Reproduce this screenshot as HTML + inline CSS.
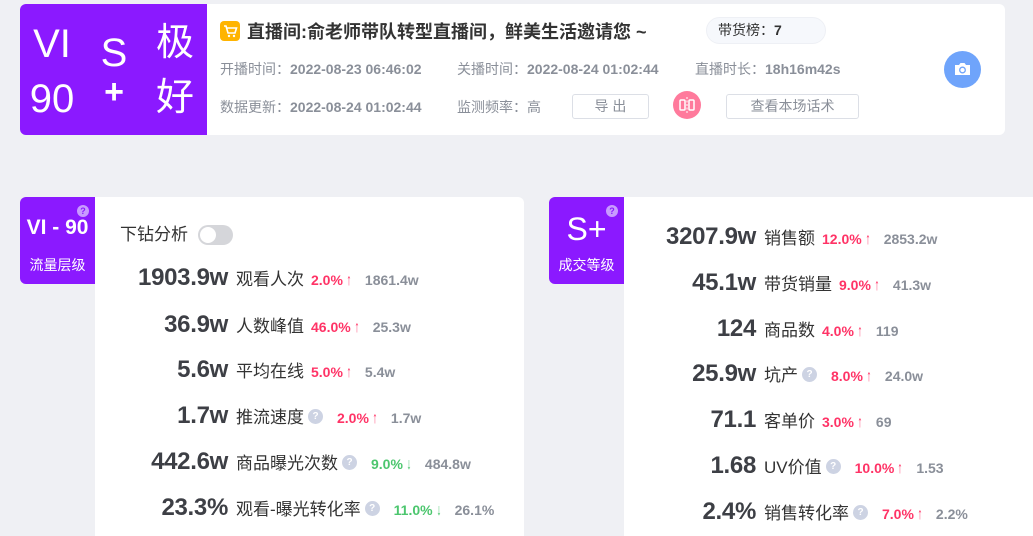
<!DOCTYPE html>
<html><head><meta charset="utf-8"><style>
*{margin:0;padding:0;box-sizing:border-box}
body{width:1033px;height:536px;overflow:hidden;background:#eff0f4;font-family:"Liberation Sans","Noto Sans CJK SC",sans-serif;position:relative;color:#333}
.a{position:absolute}
.hdr{left:20px;top:4px;width:985px;height:131px;background:#fff;border-radius:6px;overflow:hidden}
.pur{background:#8b19ff;color:#fff}
.big{font-size:38px;line-height:1;text-align:center}
.g{color:#8a8f99;font-size:14px}
.gb{color:#8a8f99;font-size:14px;font-weight:bold}
.btn{border:1px solid #dcdfe6;border-radius:3px;background:#fff;color:#8a8f99;font-size:14px;text-align:center;line-height:22px}
.card{background:#fff;border-radius:0 6px 0 0}
.badge{border-radius:6px 0 0 6px}
.row{position:absolute;display:flex;align-items:baseline;height:30px;white-space:nowrap;line-height:1}
.num{font-size:24px;font-weight:bold;color:#3d3f45;text-align:right;letter-spacing:-0.3px}
.lb{font-size:17px;color:#333;margin-left:8px}
.q{display:inline-block;width:15px;height:15px;border-radius:50%;background:#cdd3e3;color:#fff;font-size:10px;font-weight:bold;text-align:center;line-height:15px;margin-left:4px;position:relative;top:-4px}
.pc{font-size:14px;font-weight:bold;margin-left:7px}
.r{color:#ff3366}.gr{color:#4cc66e}
.ar{font-size:16px;margin-left:2px;transform:scaleX(.6);display:inline-block}
.pv{font-size:14px;font-weight:bold;color:#8a8f99;margin-left:12px}
.qq{width:12px;height:12px;border-radius:50%;background:#c89bff;color:#8b19ff;font-size:9px;font-weight:bold;text-align:center;line-height:12px}
</style></head><body>
<div class="a hdr">
 <div class="a pur" style="left:0;top:0;width:187px;height:131px"></div>
</div>
<div class="a big" style="left:30px;top:24px;width:44px;color:#fff;font-size:40px">VI</div>
<div class="a big" style="left:28px;top:79px;width:48px;color:#fff;font-size:40px">90</div>
<div class="a big" style="left:96px;top:33px;width:36px;color:#fff;font-size:40px">S</div>
<div class="a big" style="left:96px;top:75px;width:36px;color:#fff;font-size:34px;font-weight:bold">+</div>
<div class="a big" style="left:154px;top:24px;width:42px;color:#fff;font-size:38px">极</div>
<div class="a big" style="left:154px;top:79px;width:42px;color:#fff;font-size:38px">好</div>

<div class="a" style="left:220px;top:21px;width:20px;height:20px;background:#ffb400;border-radius:4px">
<svg width="20" height="20" viewBox="0 0 20 20"><path d="M4 5h2l2 7h7l1.5-5H7" fill="none" stroke="#fff" stroke-width="1.6"/><circle cx="9" cy="15" r="1.2" fill="#fff"/><circle cx="14" cy="15" r="1.2" fill="#fff"/></svg></div>
<div class="a" style="left:247px;top:20px;font-size:18px;font-weight:bold;color:#333;white-space:nowrap;line-height:24px">直播间:俞老师带队转型直播间，鲜美生活邀请您 ~</div>
<div class="a" style="left:706px;top:17px;width:120px;height:27px;border-radius:14px;background:#f6f8fc;border:1px solid #eef0f5;font-size:14px;line-height:25px;padding-left:11px;color:#333">带货榜：<b>7</b></div>

<div class="a g" style="left:220px;top:59px;white-space:nowrap">开播时间：<span class="gb">2022-08-23 06:46:02</span></div>
<div class="a g" style="left:457px;top:59px;white-space:nowrap">关播时间：<span class="gb">2022-08-24 01:02:44</span></div>
<div class="a g" style="left:695px;top:59px;white-space:nowrap">直播时长：<span class="gb">18h16m42s</span></div>
<div class="a g" style="left:220px;top:97px;white-space:nowrap">数据更新：<span class="gb">2022-08-24 01:02:44</span></div>
<div class="a g" style="left:457px;top:97px;white-space:nowrap">监测频率：高</div>
<div class="a btn" style="left:572px;top:94px;width:77px;height:25px">导 出</div>
<div class="a" style="left:673px;top:91px;width:28px;height:28px;border-radius:50%;background:#ff7a9c">
<svg width="28" height="28" viewBox="0 0 28 28"><rect x="7" y="9" width="5" height="10" rx="1" fill="none" stroke="#fff" stroke-width="1.5"/><rect x="16" y="9" width="5" height="10" rx="1" fill="none" stroke="#fff" stroke-width="1.5"/><path d="M14 6v16" stroke="#fff" stroke-width="1" stroke-dasharray="2 1.5"/></svg></div>
<div class="a btn" style="left:726px;top:94px;width:133px;height:25px">查看本场话术</div>
<div class="a" style="left:944px;top:51px;width:37px;height:37px;border-radius:50%;background:#6fa4fb">
<svg width="37" height="37" viewBox="0 0 37 37"><path d="M11 14h4l1.5-2h4l1.5 2h4v10h-15z" fill="#fff"/><circle cx="18.5" cy="19" r="2.8" fill="none" stroke="#6fa4fb" stroke-width="1.3"/></svg></div>

<!-- left card -->
<div class="a card" style="left:95px;top:197px;width:429px;height:339px"></div>
<div class="a pur badge" style="left:20px;top:197px;width:75px;height:87px"></div>
<div class="a qq" style="left:77px;top:205px">?</div>
<div class="a" style="left:20px;top:216px;width:75px;text-align:center;color:#fff;font-size:21px;font-weight:bold">VI - 90</div>
<div class="a" style="left:20px;top:255px;width:75px;text-align:center;color:#fff;font-size:14px">流量层级</div>
<div class="a" style="left:120px;top:224px;font-size:17px;color:#333;line-height:22px">下钻分析</div>
<div class="a" style="left:198px;top:225px;width:35px;height:20px;border-radius:10px;background:#d5d6da"><div style="position:absolute;left:2px;top:2px;width:16px;height:16px;border-radius:50%;background:#fff"></div></div>

<div class="row" style="left:100px;top:266px"><div class="num" style="width:128px">1903.9w</div><span class="lb">观看人次</span><span class="pc r">2.0%</span><span class="ar r">↑</span><span class="pv">1861.4w</span></div>
<div class="row" style="left:100px;top:313px"><div class="num" style="width:128px">36.9w</div><span class="lb">人数峰值</span><span class="pc r">46.0%</span><span class="ar r">↑</span><span class="pv">25.3w</span></div>
<div class="row" style="left:100px;top:358px"><div class="num" style="width:128px">5.6w</div><span class="lb">平均在线</span><span class="pc r">5.0%</span><span class="ar r">↑</span><span class="pv">5.4w</span></div>
<div class="row" style="left:100px;top:404px"><div class="num" style="width:128px">1.7w</div><span class="lb">推流速度</span><span class="q">?</span><span class="pc r" style="margin-left:14px">2.0%</span><span class="ar r">↑</span><span class="pv">1.7w</span></div>
<div class="row" style="left:100px;top:450px"><div class="num" style="width:128px">442.6w</div><span class="lb">商品曝光次数</span><span class="q">?</span><span class="pc gr" style="margin-left:14px">9.0%</span><span class="ar gr">↓</span><span class="pv">484.8w</span></div>
<div class="row" style="left:100px;top:496px"><div class="num" style="width:128px">23.3%</div><span class="lb">观看-曝光转化率</span><span class="q">?</span><span class="pc gr" style="margin-left:14px">11.0%</span><span class="ar gr">↓</span><span class="pv">26.1%</span></div>

<!-- right card -->
<div class="a card" style="left:624px;top:197px;width:420px;height:339px;border-radius:0"></div>
<div class="a pur badge" style="left:549px;top:197px;width:75px;height:87px"></div>
<div class="a qq" style="left:606px;top:205px">?</div>
<div class="a" style="left:549px;top:211px;width:75px;text-align:center;color:#fff;font-size:32px">S+</div>
<div class="a" style="left:549px;top:255px;width:75px;text-align:center;color:#fff;font-size:14px">成交等级</div>

<div class="row" style="left:630px;top:225px"><div class="num" style="width:126px">3207.9w</div><span class="lb">销售额</span><span class="pc r">12.0%</span><span class="ar r">↑</span><span class="pv">2853.2w</span></div>
<div class="row" style="left:630px;top:271px"><div class="num" style="width:126px">45.1w</div><span class="lb">带货销量</span><span class="pc r">9.0%</span><span class="ar r">↑</span><span class="pv">41.3w</span></div>
<div class="row" style="left:630px;top:317px"><div class="num" style="width:126px">124</div><span class="lb">商品数</span><span class="pc r">4.0%</span><span class="ar r">↑</span><span class="pv">119</span></div>
<div class="row" style="left:630px;top:362px"><div class="num" style="width:126px">25.9w</div><span class="lb">坑产</span><span class="q">?</span><span class="pc r" style="margin-left:14px">8.0%</span><span class="ar r">↑</span><span class="pv">24.0w</span></div>
<div class="row" style="left:630px;top:408px"><div class="num" style="width:126px">71.1</div><span class="lb">客单价</span><span class="pc r">3.0%</span><span class="ar r">↑</span><span class="pv">69</span></div>
<div class="row" style="left:630px;top:454px"><div class="num" style="width:126px">1.68</div><span class="lb">UV价值</span><span class="q">?</span><span class="pc r" style="margin-left:14px">10.0%</span><span class="ar r">↑</span><span class="pv">1.53</span></div>
<div class="row" style="left:630px;top:500px"><div class="num" style="width:126px">2.4%</div><span class="lb">销售转化率</span><span class="q">?</span><span class="pc r" style="margin-left:14px">7.0%</span><span class="ar r">↑</span><span class="pv">2.2%</span></div>
</body></html>
